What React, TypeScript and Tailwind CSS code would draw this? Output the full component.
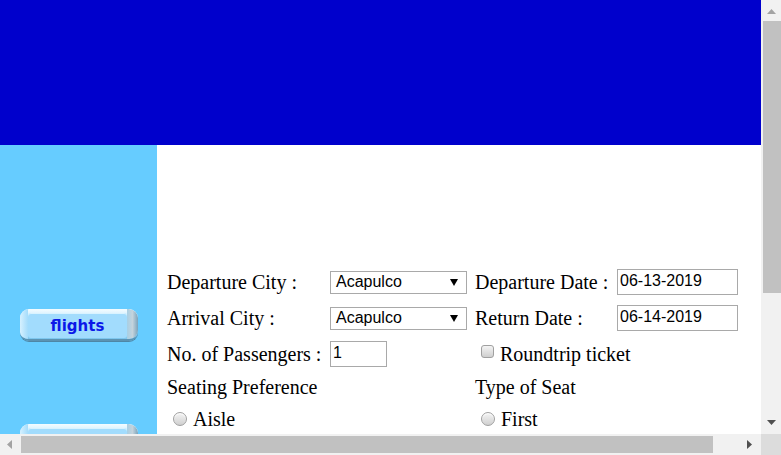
import React from 'react';

const serif = "font-['Liberation_Serif',_'Times_New_Roman',_serif]";
const sans = "font-['Liberation_Sans',Arial,sans-serif]";

function NavButton({ label }: { label: string }) {
  return (
    <div className="flex h-[32px] w-[118px] overflow-hidden rounded-[9px] border-b-2 border-[#5b93b3] bg-gradient-to-b from-[#f4fcff] via-[#a8e0ff] to-[#7cc6ee] shadow-[0_1px_0_#4e86a6]">
      <div className="w-[8px] bg-gradient-to-r from-[#d6f1ff] to-[#a4dcfb]" />
      <div className="mt-[4px] mb-[1px] flex flex-1 items-center justify-center rounded-[3px] bg-[#a2dcfd] shadow-[inset_0_1px_0_#d9f3ff]">
        <span className="font-['DejaVu_Sans',Verdana,sans-serif] text-[15px] leading-none font-bold text-[#0c18e8] pt-[1px]">{label}</span>
      </div>
      <div className="w-[11px] rounded-r-[9px] bg-gradient-to-r from-[#a7cfe4] via-[#c4d3dc] to-[#7aa3bb]" />
    </div>
  );
}

function SelectBox({ value }: { value: string }) {
  return (
    <div className={`flex h-[23px] w-[137px] items-start justify-between border border-[#a9a9a9] bg-white pl-[5px] pr-[8px] pt-[1px] ${sans} text-[16px] leading-[18px] text-black`}>
      <span>{value}</span>
      <svg width="8" height="7" viewBox="0 0 8 7" className="mt-[6px]">
        <polygon points="0,0 8,0 4,7" fill="#000" />
      </svg>
    </div>
  );
}

function TextBox({ value, w }: { value: string; w: string }) {
  return (
    <div className={`h-[26px] ${w} border border-[#a9a9a9] bg-white px-[2px] pt-[2px] ${sans} text-[16px] leading-[18px] text-black`}>
      {value}
    </div>
  );
}

function Radio() {
  return <span className="mb-[2px] ml-[6px] mr-[6px] inline-block h-[14px] w-[14px] rounded-full border border-[#a0a0a0] bg-gradient-to-b from-[#f4f4f4] to-[#d0d0d0] shadow-[inset_0_1px_1px_#fff]" />;
}

function Checkbox() {
  return <span className="mb-[5px] ml-[6px] mr-[6px] inline-block h-[13px] w-[13px] rounded-[3px] border border-[#a0a0a0] bg-gradient-to-b from-[#f4f4f4] to-[#cfcfcf]" />;
}

function Arrow({ dir, dark }: { dir: 'up' | 'down' | 'left' | 'right'; dark?: boolean }) {
  const fill = dark ? '#505050' : '#a3a3a3';
  if (dir === 'up' || dir === 'down') {
    return (
      <svg width="9" height="5" viewBox="0 0 9 5">
        <polygon points={dir === 'up' ? '0,5 9,5 4.5,0' : '0,0 9,0 4.5,5'} fill={fill} />
      </svg>
    );
  }
  return (
    <svg width="5" height="9" viewBox="0 0 5 9">
      <polygon points={dir === 'left' ? '5,0 5,9 0,4.5' : '0,0 0,9 5,4.5'} fill={fill} />
    </svg>
  );
}

export default function App() {
  return (
    <div className="grid h-[455px] w-[781px] grid-cols-[761px_20px] grid-rows-[434px_21px] overflow-hidden bg-white">
      {/* page */}
      <div className="flex flex-col overflow-hidden">
        <header className="h-[145px] shrink-0 bg-[#0000cc]" />
        <div className="flex flex-1">
          <aside className="flex w-[157px] shrink-0 flex-col gap-[83px] bg-[#66ccff] pl-[20px] pt-[164px]">
            <NavButton label="flights" />
            <NavButton label="itinerary" />
          </aside>
          <main className={`flex-1 bg-white pl-[10px] pt-[119px] ${serif} text-[20px] leading-[21px] text-black`}>
            <div className="grid grid-cols-[163px_145px_142px_121px] grid-rows-[36px_36px_36px_31px_33px] items-center">
              <span>Departure City :</span>
              <SelectBox value="Acapulco" />
              <span>Departure Date :</span>
              <TextBox value="06-13-2019" w="w-[121px]" />

              <span>Arrival City :</span>
              <SelectBox value="Acapulco" />
              <span>Return Date :</span>
              <TextBox value="06-14-2019" w="w-[121px]" />

              <span>No. of Passengers :</span>
              <TextBox value="1" w="w-[57px]" />
              <label className="col-span-2 flex items-center">
                <Checkbox />
                Roundtrip ticket
              </label>

              <span className="col-span-2">Seating Preference</span>
              <span className="col-span-2">Type of Seat</span>

              <label className="col-span-2 flex items-center">
                <Radio />
                Aisle
              </label>
              <label className="col-span-2 flex items-center">
                <Radio />
                First
              </label>
            </div>
          </main>
        </div>
      </div>

      {/* vertical scrollbar */}
      <div className="flex flex-col items-end bg-[#f1f1f1]">
        <div className="flex h-[21px] w-full items-start justify-center pt-[9px]">
          <Arrow dir="up" />
        </div>
        <div className="h-[272px] w-[18px] bg-[#c1c1c1]" />
        <div className="flex-1" />
        <div className="flex h-[17px] w-full items-start justify-center pt-[3px] pb-[9px]">
          <Arrow dir="down" dark />
        </div>
      </div>

      {/* horizontal scrollbar */}
      <div className="flex items-center bg-[#f1f1f1]">
        <div className="flex h-full w-[21px] items-center justify-start pl-[7px]">
          <Arrow dir="left" />
        </div>
        <div className="h-[17px] w-[692px] bg-[#c1c1c1]" />
        <div className="flex-1" />
        <div className="flex h-full w-[14px] items-center justify-start pr-[8px]">
          <Arrow dir="right" dark />
        </div>
      </div>
      <div className="bg-[#dcdcdc]" />
    </div>
  );
}
